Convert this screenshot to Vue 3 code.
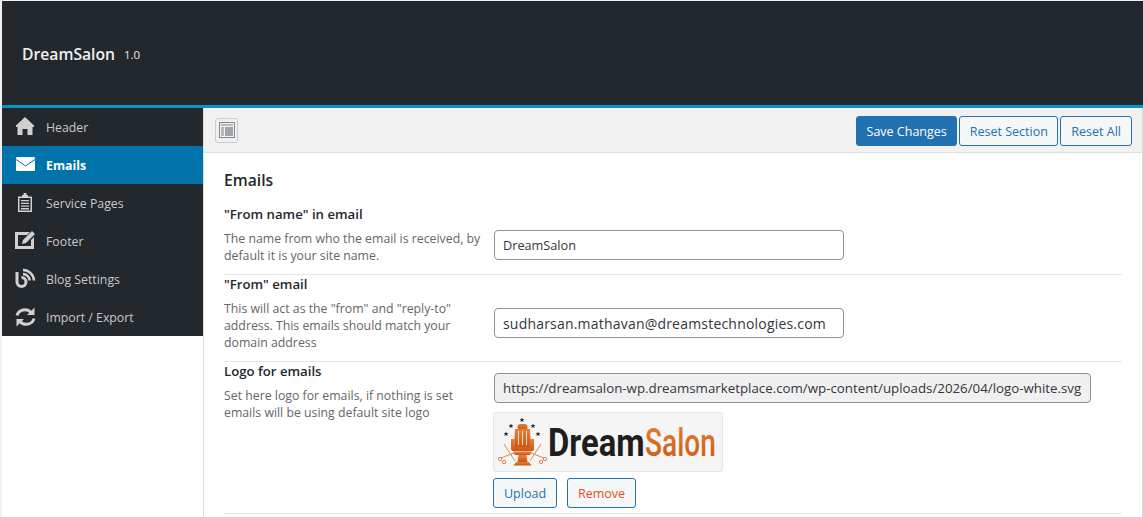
<template>
  <div class="panel">
    <header class="top">
      <span class="brand">DreamSalon</span>
      <span class="version">1.0</span>
    </header>
    <div class="body">
      <nav class="side">
        <a v-for="item in menu" :key="item.label" class="side-item" :class="{ active: item.active }">
          <svg class="side-icon" viewBox="0 0 20 20" v-html="item.icon"></svg>
          <span>{{ item.label }}</span>
        </a>
      </nav>
      <main class="main">
        <div class="toolbar">
          <button class="expand" aria-label="Expand">
            <svg viewBox="0 0 16 16" width="16" height="16">
              <path fill="#82878c" d="M0 0h16v16H0z" />
              <path fill="#f1f1f1" d="M1 1h14v14H1z" />
              <path fill="#b4b9be" d="M2 2h12v2H2zM2 5h3v9H2z" />
              <path fill="#a0a5aa" d="M6 5h8v9H6z" />
            </svg>
          </button>
          <div class="actions">
            <button class="btn primary">Save Changes</button>
            <button class="btn">Reset Section</button>
            <button class="btn last">Reset All</button>
          </div>
        </div>
        <section class="content">
          <h2>Emails</h2>
          <div class="row first">
            <div class="label">
              <h4>"From name" in email</h4>
              <p>The name from who the email is received, by default it is your site name.</p>
            </div>
            <div class="field">
              <input class="text name" value="DreamSalon" />
            </div>
          </div>
          <div class="row second">
            <div class="label">
              <h4>"From" email</h4>
              <p>This will act as the "from" and "reply-to" address. This emails should match your domain address</p>
            </div>
            <div class="field">
              <input class="text email" value="sudharsan.mathavan@dreamstechnologies.com" />
            </div>
          </div>
          <div class="row third">
            <div class="label">
              <h4>Logo for emails</h4>
              <p>Set here logo for emails, if nothing is set emails will be using default site logo</p>
            </div>
            <div class="field">
              <input class="text url" readonly value="https://dreamsalon-wp.dreamsmarketplace.com/wp-content/uploads/2026/04/logo-white.svg" />
              <div class="preview">
                <svg viewBox="0 0 228 58" width="228" height="58">
                  <defs>
                    <linearGradient id="orange" x1="0" y1="0" x2="0" y2="1">
                      <stop offset="0" stop-color="#e8813a" />
                      <stop offset="1" stop-color="#c95812" />
                    </linearGradient>
                  </defs>
                  <g fill="#222">
                    <path v-for="s in stars" :key="s" :transform="s" d="M0-2.600.7-.8 2.500-.8 1.100.3 1.600 2.100 0 1-1.600 2.100-1.100.3-2.500-.8-.7-.8z" />
                  </g>
                  <g fill="url(#orange)">
                    <rect x="23.500" y="11" width="10" height="6" rx="2.500" />
                    <path d="M21 16h15l1 18H20z" />
                    <path d="M17 26h3.500v8h16v-8H40v10q0 2-2 2H19q-2 0-2-2z" />
                    <path d="M19 38.500h19l-2 3.500H21z" />
                    <path d="M24.500 42h8l1 7h-10z" />
                    <path d="M22 49h13l2.500 3.500h-18z" />
                  </g>
                  <path d="M24.500 18v14M28.500 18v14M32.500 18v14" stroke="#f5f5f5" stroke-width=".8" />
                  <g fill="none" stroke="#dd7a3a" stroke-width=".9">
                    <path d="M10 31l11 17M7 45l13-5M47 31 36 48M50 45l-13-5" />
                    <circle cx="6" cy="46" r="1.700" />
                    <circle cx="10" cy="49" r="1.700" />
                    <circle cx="51" cy="46" r="1.700" />
                    <circle cx="47" cy="49" r="1.700" />
                  </g>
                  <!-- the logo face is condensed, squeeze Roboto to fit -->
                  <text class="logo-dream" transform="translate(54 43) scale(.84 1)">Dream</text>
                  <text class="logo-salon" transform="translate(151 43) scale(.72 1)" fill="url(#orange)">Salon</text>
                </svg>
              </div>
              <div class="upload">
                <button class="btn">Upload</button>
                <button class="btn remove">Remove</button>
              </div>
            </div>
          </div>
        </section>
      </main>
    </div>
  </div>
</template>

<script setup>
// icon boxes are 20x20, some shapes poke out by a pixel to match the reference
const menu = [
  {
    label: 'Header',
    icon: '<path fill="currentColor" d="M9 0 0 8.500V10h1.500v8h5v-6h5v6h5v-8H18V8.500z"/>',
  },
  {
    label: 'Emails',
    active: true,
    icon: '<rect fill="currentColor" y="2" width="19" height="14" rx="1"/><path fill="none" stroke="#0073aa" d="M0 4.500 9.500 11 19 4.500"/>',
  },
  {
    label: 'Service Pages',
    icon: '<path fill="currentColor" fill-rule="evenodd" d="M6 2h1.500V0h3v2H12v1.500h4V19H2V3.500h4zM3.500 5v12.500h11V5zM5 7h8v1.300H5zm0 2.700h8V11H5zm0 2.700h8v1.300H5zm0 2.700h8v1.300H5z"/>',
  },
  {
    label: 'Footer',
    icon: '<path fill="currentColor" d="M-1 1h15l-3 3H2v11h13V9l3-3v12H-1z"/><path fill="currentColor" d="M16 0 19 3 10 12 6 13 7 9z"/>',
  },
  {
    label: 'Blog Settings',
    icon: '<path fill="none" stroke="currentColor" stroke-width="3" d="M1 3v10a4.500 4.500 0 1 0 4.500-4.500"/><path fill="none" stroke="currentColor" stroke-width="2.500" d="M7 5a6.500 6.500 0 0 1 6.500 6.500M7 1a11 11 0 0 1 11 10.500"/>',
  },
  {
    label: 'Import / Export',
    icon: '<path fill="none" stroke="currentColor" stroke-width="3" d="M1 8.500a8 7.500 0 0 1 14-3M18 11.500a8 7.500 0 0 1-14 3"/><path fill="currentColor" d="M18.500 .5v7.500H11zM.5 19.500V12H8z"/>',
  },
]

const stars = [
  'translate(12 21)',
  'translate(17 13)',
  'translate(28 7)',
  'translate(39 13)',
  'translate(44 21)',
]
</script>

<style scoped>
.panel {
  box-sizing: border-box;
  width: 1141px;
  height: 516px;
  margin: 1px 0 0 2px;
  overflow: hidden;
  font-family: "Open Sans", "Noto Sans", sans-serif;
  font-size: 13px;
  color: #444;
  background: #fff;
}

.top {
  height: 104px;
  display: flex;
  align-items: center;
  gap: 9px;
  padding: 0 20px;
  background: #23282d;
  border-bottom: 3px solid #0096c8;
}

.brand {
  padding-top: 2px;
  color: #f1f1f1;
  font-size: 15.700px;
  font-weight: 600;
}

.version {
  padding-top: 3px;
  color: #e8e8e8;
  font-size: 11.500px;
}

.body {
  display: flex;
  align-items: flex-start;
}

.side {
  flex: none;
  width: 201px;
  background: #23282d;
}

.side-item {
  display: flex;
  align-items: center;
  gap: 10px;
  height: 38px;
  padding-left: 14px;
  color: #c9c9c9;
  font-size: 12.300px;
}

.side-item.active {
  background: #0073aa;
  color: #fff;
  font-weight: 700;
}

.side-icon {
  flex: none;
  width: 20px;
  height: 20px;
  overflow: visible;
  color: #d0d0d0;
}

.active .side-icon {
  color: #fff;
}

.main {
  flex: 1;
  min-height: 410px;
  border-left: 1px solid #ddd;
  border-right: 1px solid #ddd;
}

.toolbar {
  box-sizing: border-box;
  height: 45px;
  display: flex;
  align-items: center;
  justify-content: space-between;
  padding: 0 10px 0 11px;
  background: #f1f1f1;
  border-bottom: 1px solid #dedede;
}

.expand {
  width: 23px;
  height: 25px;
  padding: 0;
  display: flex;
  align-items: center;
  justify-content: center;
  background: #f1f1f1;
  border: 1px solid #ccc;
  border-radius: 3px;
}

.actions {
  display: flex;
  gap: 2px;
  margin-top: 2px;
}

.btn {
  height: 30px;
  padding: 0 10px;
  font: inherit;
  font-size: 12.500px;
  color: #2271b1;
  background: #f6f7f7;
  border: 1px solid #2271b1;
  border-radius: 3px;
}

.actions .btn {
  padding: 0 9.500px;
}

.actions .btn.last {
  padding: 0 10px;
}

.btn.primary {
  background: #2271b1;
  color: #fff;
}

.content {
  padding: 0 20px;
}

h2 {
  margin: 0;
  padding-top: 16px;
  font-size: 15.700px;
  font-weight: 600;
  line-height: 22px;
  color: #23282d;
}

.row {
  box-sizing: border-box;
  display: flex;
  border-bottom: 1px solid #e5e5e5;
}

.row.first {
  height: 84px;
  padding-top: 14px;
}

.row.second {
  height: 87px;
}

.row.third {
  height: 152px;
}

.label {
  flex: none;
  width: 270px;
}

h4 {
  margin: 0 0 7px;
  font-size: 13.200px;
  font-weight: 600;
  line-height: 18px;
  color: #23282d;
}

p {
  width: 258px;
  margin: 0;
  font-size: 12.300px;
  line-height: 17px;
  color: #666;
}

.first .field {
  padding-top: 25px;
}

.second .field {
  padding-top: 33px;
}

.third .field {
  padding-top: 11px;
}

.text {
  box-sizing: border-box;
  display: block;
  width: 350px;
  height: 30px;
  padding: 0 8px;
  font: inherit;
  color: #32373c;
  background: #fff;
  border: 1px solid #8c8f94;
  border-radius: 4px;
}

.text.name {
  font-size: 12.700px;
}

.text.email {
  font-size: 14px;
  letter-spacing: 0.2px;
}

.text.url {
  width: 597px;
  font-size: 13.300px;
  background: #f0f0f1;
}

.preview {
  box-sizing: border-box;
  width: 230px;
  height: 60px;
  margin: 9px 0 0 -1px;
  background: #f5f5f5;
  border: 1px solid #e5e5e5;
  border-radius: 3px;
}

.preview svg {
  display: block;
}

.logo-dream,
.logo-salon {
  font-family: Roboto, "Liberation Sans", sans-serif;
  font-size: 39px;
}

.logo-dream {
  font-weight: 700;
  fill: #1e1e1e;
}

.logo-salon {
  font-weight: 500;
}

.upload {
  display: flex;
  gap: 10px;
  margin: 6px 0 0 -1px;
}

.remove {
  color: #e2501e;
}
</style>

<style>
html, body {
  margin: 0;
  overflow: hidden;
  background: #f0f0f1;
}
</style>
